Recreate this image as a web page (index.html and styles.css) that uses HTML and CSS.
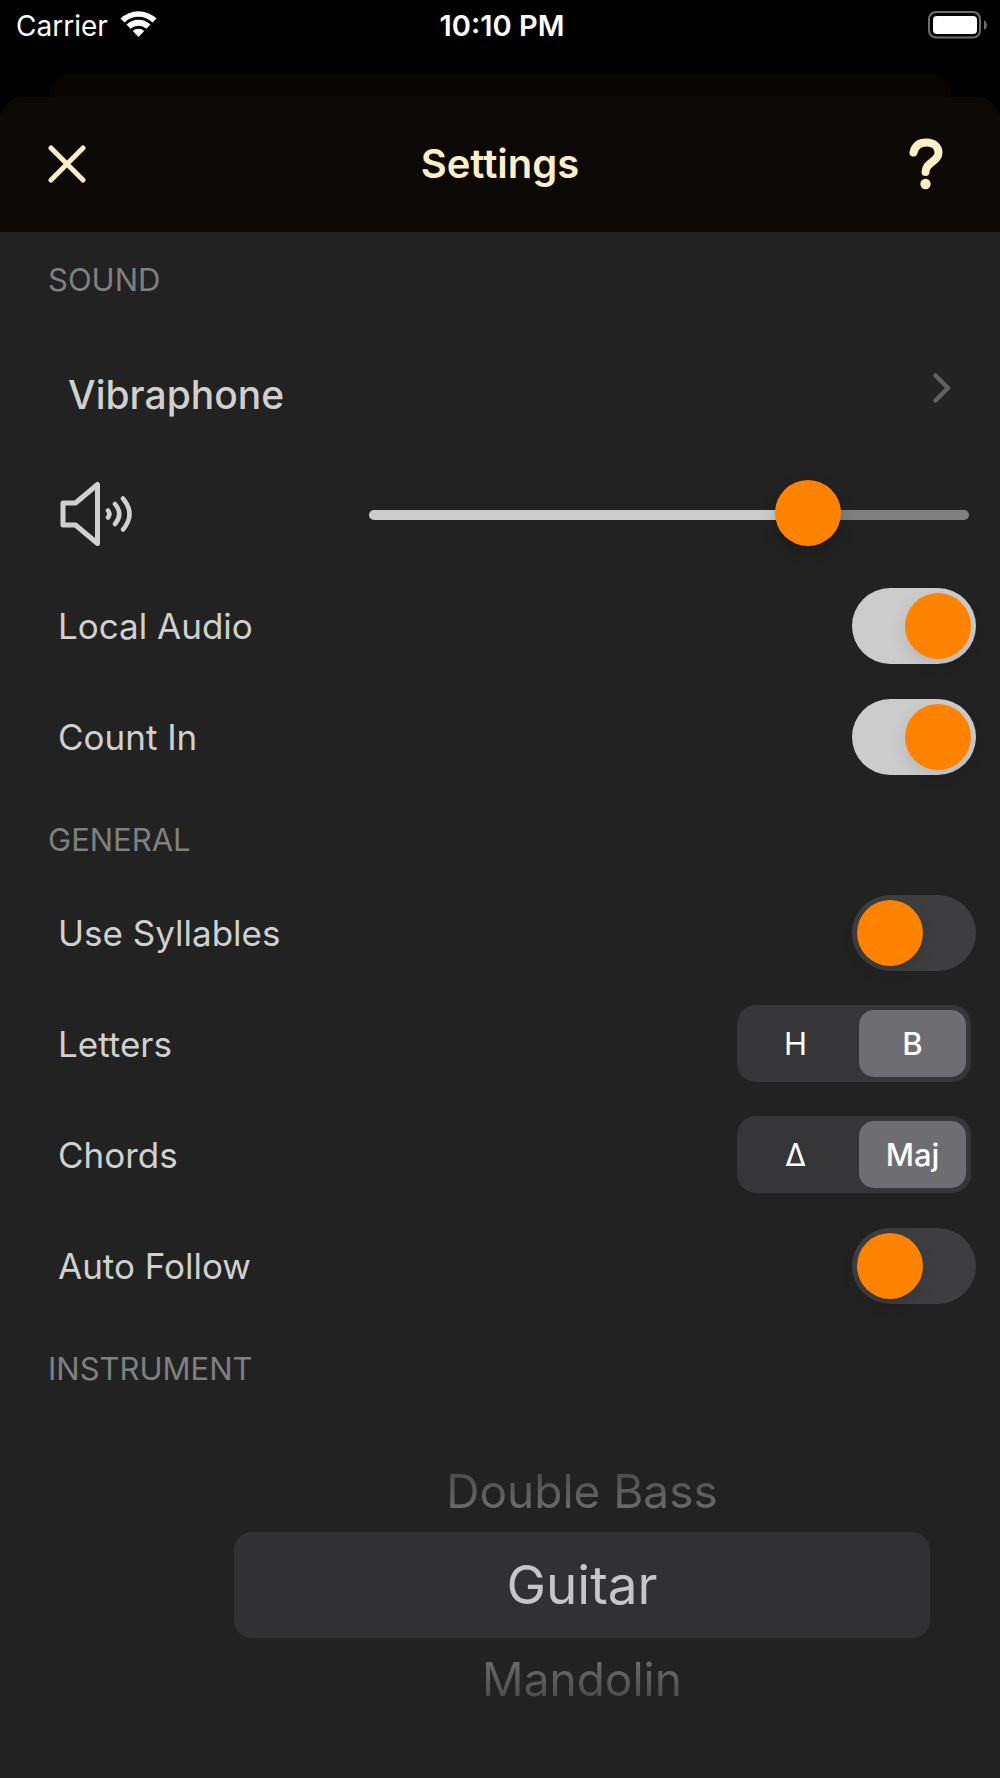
FILE: index.html
```html
<!DOCTYPE html>
<html lang="en">
<head>
    <meta charset="UTF-8">
    <meta name="viewport" content="width=device-width, initial-scale=1.0">
    <title>Settings</title>
    <link rel="stylesheet" href="styles.css">
</head>
<body>
    <div class="status-bar">
        <div class="status-left">
            <span>Carrier</span>
            <svg class="wifi" viewBox="0 0 37 28" width="37" height="28">
                <path d="M0.5 8.5 A26 26 0 0 1 36.5 8.5 L32.5 12.5 A20 20 0 0 0 4.5 12.5 Z" fill="#fff"/>
                <path d="M6.5 14.5 A17.5 17.5 0 0 1 30.5 14.5 L26.5 18.7 A12 12 0 0 0 10.5 18.7 Z" fill="#fff"/>
                <path d="M12.8 21 A8.5 8.5 0 0 1 24.2 21 L18.5 27 Z" fill="#fff"/>
            </svg>
        </div>
        <div class="status-time">10:10 PM</div>
        <div class="status-right">
            <svg viewBox="0 0 60 28" width="60" height="28">
                <rect x="1" y="1" width="51" height="25.5" rx="7" fill="none" stroke="#6e6e6e" stroke-width="2"/>
                <rect x="5" y="5" width="44" height="18" rx="4" fill="#fff"/>
                <path d="M56 9 Q59 11 59 14 Q59 17 56 19 Z" fill="#6e6e6e"/>
            </svg>
        </div>
    </div>
    <div class="back-card"></div>
    <div class="sheet">
        <header class="sheet-header">
            <button type="button" class="icon-button" aria-label="Close">
                <svg viewBox="0 0 38 38" width="38" height="38">
                    <path d="M3 3 L35 35 M35 3 L3 35" fill="none" stroke="#ffeec8" stroke-width="5" stroke-linecap="round"/>
                </svg>
            </button>
            <h1>Settings</h1>
            <button type="button" class="icon-button help-button" aria-label="Help">
                <svg viewBox="0 0 34 52" width="34" height="52">
                    <path d="M4.5 14.5 C6 7.5 11 4.5 17.5 4.5 C24.5 4.5 29.5 8.5 29.5 14.5 C29.5 24 16.5 24 16.5 34" fill="none" stroke="#ffeec8" stroke-width="8" stroke-linecap="round"/>
                    <circle cx="16.5" cy="46" r="5.2" fill="#ffeec8"/>
                </svg>
            </button>
        </header>
        <main class="settings">
            <section>
                <h2>SOUND</h2>
                <a href="#" class="row sound-link">
                    <span>Vibraphone</span>
                    <svg viewBox="0 0 18 30" width="18" height="30">
                        <path d="M2.5 2.5 L15 15 L2.5 27.5" fill="none" stroke="#606062" stroke-width="4.5" stroke-linecap="round" stroke-linejoin="round"/>
                    </svg>
                </a>
                <div class="row">
                    <label for="volume" class="volume-label" aria-label="Volume">
                        <svg viewBox="0 0 74 68" width="74" height="68">
                            <path d="M5 22 H17.5 L39.5 3.5 V62.5 L17.500 44 H5 Z" fill="none" stroke="#d0d0d2" stroke-width="5" stroke-linejoin="round"/>
                            <path d="M50 29.5 Q53 33 50 36.5" fill="none" stroke="#d0d0d2" stroke-width="4.5" stroke-linecap="round"/>
                            <path d="M57 23 Q65.5 33 57 43 M65 17.5 Q78 33 65 48.5" fill="none" stroke="#d0d0d2" stroke-width="4.5" stroke-linecap="round"/>
                        </svg>
                    </label>
                    <input type="range" id="volume" class="slider" min="0" max="100" value="76">
                </div>
                <div class="row">
                    <label for="local-audio">Local Audio</label>
                    <input type="checkbox" id="local-audio" class="toggle" checked>
                </div>
                <div class="row">
                    <label for="count-in">Count In</label>
                    <input type="checkbox" id="count-in" class="toggle" checked>
                </div>
            </section>
            <section>
                <h2>GENERAL</h2>
                <div class="row">
                    <label for="syllables">Use Syllables</label>
                    <input type="checkbox" id="syllables" class="toggle">
                </div>
                <div class="row">
                    <span id="letters-label">Letters</span>
                    <div class="segmented" role="radiogroup" aria-labelledby="letters-label">
                        <label><input type="radio" name="letters"><span>H</span></label>
                        <label><input type="radio" name="letters" checked><span>B</span></label>
                    </div>
                </div>
                <div class="row">
                    <span id="chords-label">Chords</span>
                    <div class="segmented" role="radiogroup" aria-labelledby="chords-label">
                        <label><input type="radio" name="chords"><span>Δ</span></label>
                        <label><input type="radio" name="chords" checked><span>Maj</span></label>
                    </div>
                </div>
                <div class="row">
                    <label for="auto-follow">Auto Follow</label>
                    <input type="checkbox" id="auto-follow" class="toggle">
                </div>
            </section>
            <section>
                <h2 id="instrument-label">INSTRUMENT</h2>
                <div class="picker" role="radiogroup" aria-labelledby="instrument-label">
                    <label class="above"><input type="radio" name="instrument"><span>Double Bass</span></label>
                    <label><input type="radio" name="instrument" checked><span>Guitar</span></label>
                    <label class="below"><input type="radio" name="instrument"><span>Mandolin</span></label>
                </div>
            </section>
        </main>
    </div>
</body>
</html>
```
FILE: styles.css
```css
* {
    box-sizing: border-box;
}

body {
    margin: 0;
    min-height: 100vh;
    display: flex;
    flex-direction: column;
    background-color: #000;
    color: #d0d0d0;
    font-family: Inter, "Liberation Sans", sans-serif;
    font-size: 35px;
}

h1, h2 {
    margin: 0;
}

svg {
    display: block;
}

/* Status bar */
.status-bar {
    height: 73px;
    padding: 8px 12px 0 16px;
    display: grid;
    grid-template-columns: 1fr auto 1fr;
    align-items: start;
    color: #fff;
    font-size: 28px;
    line-height: 36px;
}

.status-left {
    display: flex;
    gap: 12px;
}

.wifi {
    margin-top: 2px;
}

.status-time {
    font-size: 29px;
    font-weight: 600;
}

.status-right {
    display: flex;
    justify-content: flex-end;
    padding-top: 3px;
}

/* Sheet */
.back-card {
    height: 24px;
    margin: 0 49px;
    background-color: #0a0603;
    border-radius: 22px 22px 0 0;
}

.sheet {
    flex: 1;
    background-color: #222;
    border-radius: 24px 24px 0 0;
    overflow: hidden;
}

.sheet-header {
    height: 135px;
    padding: 0 48px 2px;
    display: grid;
    grid-template-columns: 1fr auto 1fr;
    align-items: center;
    background-color: #0c0805;
    color: #ffeec8;
}

.sheet-header h1 {
    font-size: 40px;
    font-weight: 600;
}

.icon-button {
    padding: 0;
    border: none;
    background: none;
    justify-self: start;
    cursor: pointer;
}

.help-button {
    justify-self: end;
    margin-right: 9px;
}

/* Rows */
.settings h2 {
    height: 85px;
    padding: 30px 48px 0;
    color: #808080;
    font-size: 31px;
    font-weight: 400;
    line-height: 36px;
}

.row {
    height: 111px;
    padding: 0 24px 0 58px;
    display: flex;
    align-items: center;
    justify-content: space-between;
}

.sound-link {
    height: 142px;
    padding: 0 49px 0 68px;
    color: inherit;
    font-size: 39px;
    font-weight: 500;
    text-decoration: none;
}

.sound-link span {
    padding-top: 12px;
}

/* Slider */
.volume-label {
    width: 311px;
}

.slider {
    appearance: none;
    flex: 1;
    height: 66px;
    margin: 0 7px 0 0;
    background: none;
}

.slider::-webkit-slider-runnable-track {
    height: 10px;
    border-radius: 5px;
    background: linear-gradient(to right, #ccc 73%, #808080 73%);
}

.slider::-webkit-slider-thumb {
    appearance: none;
    width: 66px;
    height: 66px;
    margin-top: -30px;
    border-radius: 50%;
    background-color: #ff8200;
    box-shadow: 0 6px 16px rgba(0, 0, 0, 0.2);
}

/* Toggle */
.toggle {
    appearance: none;
    width: 124px;
    height: 76px;
    margin: 0;
    padding: 5px;
    display: flex;
    border-radius: 38px;
    background-color: #3e3e40;
}

.toggle::before {
    content: "";
    width: 66px;
    height: 66px;
    border-radius: 50%;
    background-color: #ff8200;
    box-shadow: 0 6px 16px rgba(0, 0, 0, 0.1);
}

.toggle:checked {
    justify-content: flex-end;
    background-color: #ccc;
}

/* Segmented control */
.segmented {
    width: 234px;
    height: 77px;
    margin-right: 5px;
    display: flex;
    border-radius: 19px;
    background-color: #363638;
    color: #fff;
    font-size: 31px;
}

.segmented label {
    flex: 1;
    display: flex;
    padding: 5px;
}

.segmented input,
.picker input {
    appearance: none;
    width: 0;
    margin: 0;
}

.segmented span {
    flex: 1;
    display: flex;
    align-items: center;
    justify-content: center;
    border-radius: 15px;
}

.segmented input:checked + span {
    background-color: #6e6d72;
    font-weight: 500;
}

/* Instrument picker */
.picker {
    margin: 44px 70px 0 234px;
}

.picker label {
    height: 82px;
    display: flex;
    font-size: 46px;
}

.picker span {
    flex: 1;
    display: flex;
    align-items: center;
    justify-content: center;
    border-radius: 18px;
    color: transparent;
    background-clip: text;
}

.picker .above span {
    background-image: linear-gradient(to bottom, #484848 20%, #707070 80%);
}

.picker .below span {
    background-image: linear-gradient(to bottom, #707070 20%, #484848 80%);
}

.picker label:has(input:checked) {
    height: 106px;
    font-size: 53px;
}

.picker input:checked + span {
    color: #c6c6c8;
    background: #313133;
}
```
